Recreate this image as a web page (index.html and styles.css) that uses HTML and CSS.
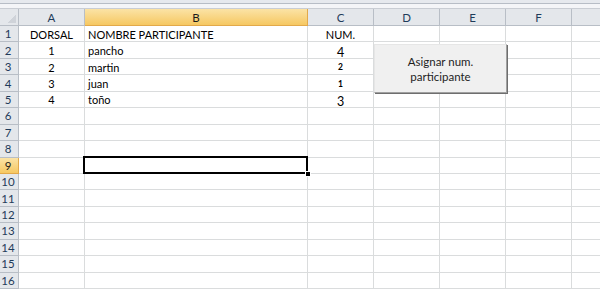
FILE: index.html
```html
<!DOCTYPE html>
<html lang="es">
<head>
  <meta charset="UTF-8" />
  <meta name="viewport" content="width=device-width, initial-scale=1" />
  <title>Hoja1 - Participantes</title>
  <link rel="stylesheet" href="styles.css">
</head>
<body>
  <div class="window">
    <!-- borde inferior de la barra de fórmulas -->
    <div class="formula-edge"></div>

    <div class="sheet">
      <!-- cabecera de columnas -->
      <div class="corner"></div>
      <div class="col-head">A</div>
      <div class="col-head active">B</div>
      <div class="col-head">C</div>
      <div class="col-head">D</div>
      <div class="col-head">E</div>
      <div class="col-head">F</div>
      <div class="col-head"></div>

      <div class="row-head">1</div>
      <div class="cell center">DORSAL</div>
      <div class="cell">NOMBRE PARTICIPANTE</div>
      <div class="cell center">NUM.</div>
      <div class="cell"></div><div class="cell"></div><div class="cell"></div><div class="cell"></div>

      <div class="row-head">2</div>
      <div class="cell center">1</div>
      <div class="cell">pancho</div>
      <div class="cell center"><span class="fig">4</span></div>
      <div class="cell"></div><div class="cell"></div><div class="cell"></div><div class="cell"></div>

      <div class="row-head">3</div>
      <div class="cell center">2</div>
      <div class="cell">martin</div>
      <div class="cell center"><span class="fig small">2</span></div>
      <div class="cell"></div><div class="cell"></div><div class="cell"></div><div class="cell"></div>

      <div class="row-head">4</div>
      <div class="cell center">3</div>
      <div class="cell">juan</div>
      <div class="cell center"><span class="fig small">1</span></div>
      <div class="cell"></div><div class="cell"></div><div class="cell"></div><div class="cell"></div>

      <div class="row-head">5</div>
      <div class="cell center">4</div>
      <div class="cell">toño</div>
      <div class="cell center"><span class="fig">3</span></div>
      <div class="cell"></div><div class="cell"></div><div class="cell"></div><div class="cell"></div>

      <div class="row-head">6</div>
      <div class="cell"></div><div class="cell"></div><div class="cell"></div><div class="cell"></div><div class="cell"></div><div class="cell"></div><div class="cell"></div>
      <div class="row-head">7</div>
      <div class="cell"></div><div class="cell"></div><div class="cell"></div><div class="cell"></div><div class="cell"></div><div class="cell"></div><div class="cell"></div>
      <div class="row-head">8</div>
      <div class="cell"></div><div class="cell"></div><div class="cell"></div><div class="cell"></div><div class="cell"></div><div class="cell"></div><div class="cell"></div>

      <div class="row-head active">9</div>
      <div class="cell"></div>
      <div class="cell selected"><span class="handle"></span></div>
      <div class="cell"></div><div class="cell"></div><div class="cell"></div><div class="cell"></div><div class="cell"></div>

      <div class="row-head">10</div>
      <div class="cell"></div><div class="cell"></div><div class="cell"></div><div class="cell"></div><div class="cell"></div><div class="cell"></div><div class="cell"></div>
      <div class="row-head">11</div>
      <div class="cell"></div><div class="cell"></div><div class="cell"></div><div class="cell"></div><div class="cell"></div><div class="cell"></div><div class="cell"></div>
      <div class="row-head">12</div>
      <div class="cell"></div><div class="cell"></div><div class="cell"></div><div class="cell"></div><div class="cell"></div><div class="cell"></div><div class="cell"></div>
      <div class="row-head">13</div>
      <div class="cell"></div><div class="cell"></div><div class="cell"></div><div class="cell"></div><div class="cell"></div><div class="cell"></div><div class="cell"></div>
      <div class="row-head">14</div>
      <div class="cell"></div><div class="cell"></div><div class="cell"></div><div class="cell"></div><div class="cell"></div><div class="cell"></div><div class="cell"></div>
      <div class="row-head">15</div>
      <div class="cell"></div><div class="cell"></div><div class="cell"></div><div class="cell"></div><div class="cell"></div><div class="cell"></div><div class="cell"></div>
      <div class="row-head">16</div>
      <div class="cell"></div><div class="cell"></div><div class="cell"></div><div class="cell"></div><div class="cell"></div><div class="cell"></div><div class="cell"></div>
    </div>

    <!-- botón de la macro, flotando sobre la hoja -->
    <button class="macro-btn" type="button">Asignar num.<br>participante</button>
  </div>
</body>
</html>
```

FILE: styles.css
```css
body {
  margin: 0;
  background: #ffffff;
  overflow: hidden;
  font-family: Lato, "Open Sans", sans-serif;
  font-size: 11px;
  color: #000;
}
.window {
  position: relative;
  width: 600px;
  height: 291px;
  overflow: hidden;
}
.formula-edge {
  height: 9px;
  box-sizing: border-box;
  background: linear-gradient(#e6e9ee 0 3px, #b7bdc6 3px 4px, #f4f5f8 4px 8px, #c9cdd4 8px 9px);
}
.sheet {
  display: grid;
  grid-template-columns: 19px 66px 223px 66px 66px 66px 66px 66px;
  grid-template-rows: 17px repeat(16, 16.45px);
  width: 638px;
}
.sheet > div {
  box-sizing: border-box;
  border-right: 1px solid #dadcdd;
  border-bottom: 1px solid #dadcdd;
  display: flex;
  align-items: center;
  white-space: nowrap;
}
.corner {
  background: #e4e7eb;
  position: relative;
}
.corner::after {
  content: "";
  position: absolute;
  right: 2px;
  bottom: 2px;
  width: 9px;
  height: 9px;
  background: linear-gradient(135deg, transparent 50%, #cfd3d9 50%);
}
.sheet > .corner,
.sheet > .col-head,
.sheet > .row-head {
  border-right-color: #b8bec6;
  border-bottom-color: #b8bec6;
}
.col-head {
  background: #e4e7eb;
  justify-content: center;
  font-size: 11.5px;
  color: #1f3b5a;
}
.row-head {
  background: #e4e7eb;
  justify-content: center;
  padding-right: 2px;
  font-size: 11.5px;
  color: #1f3b5a;
}
.sheet > .active {
  background: linear-gradient(#fbe3a6, #f6c862);
  border-right-color: #e2a94a;
  border-bottom-color: #e2a94a;
  color: #1a1a1a;
}
.cell {
  padding-left: 3px;
  padding-top: 1px;
}
.center {
  justify-content: center;
  padding-left: 0;
}
.fig {
  font-size: 12.5px;
  position: relative;
  top: 2px;
}
.fig.small {
  font-size: 8.5px;
  font-weight: bold;
  top: 0;
}
.selected {
  position: relative;
}
.selected::before {
  content: "";
  position: absolute;
  left: -2px;
  top: -2px;
  right: -1px;
  bottom: -1px;
  border: 2px solid #000;
}
.handle {
  position: absolute;
  right: -4px;
  bottom: -4px;
  width: 4px;
  height: 4px;
  background: #000;
  border: 1px solid #fff;
}
.macro-btn {
  position: absolute;
  left: 374px;
  top: 44px;
  width: 133px;
  height: 49px;
  margin: 0;
  padding: 0;
  background: #f0f0f0;
  border: 1px solid;
  border-color: #e6e6e6 #a0a0a0 #a0a0a0 #e6e6e6;
  box-shadow: 1px 1px 0 #6e6e6e;
  font-family: Lato, "Open Sans", sans-serif;
  font-size: 11.5px;
  line-height: 15px;
  color: #1e1e1e;
  text-align: center;
}
```
